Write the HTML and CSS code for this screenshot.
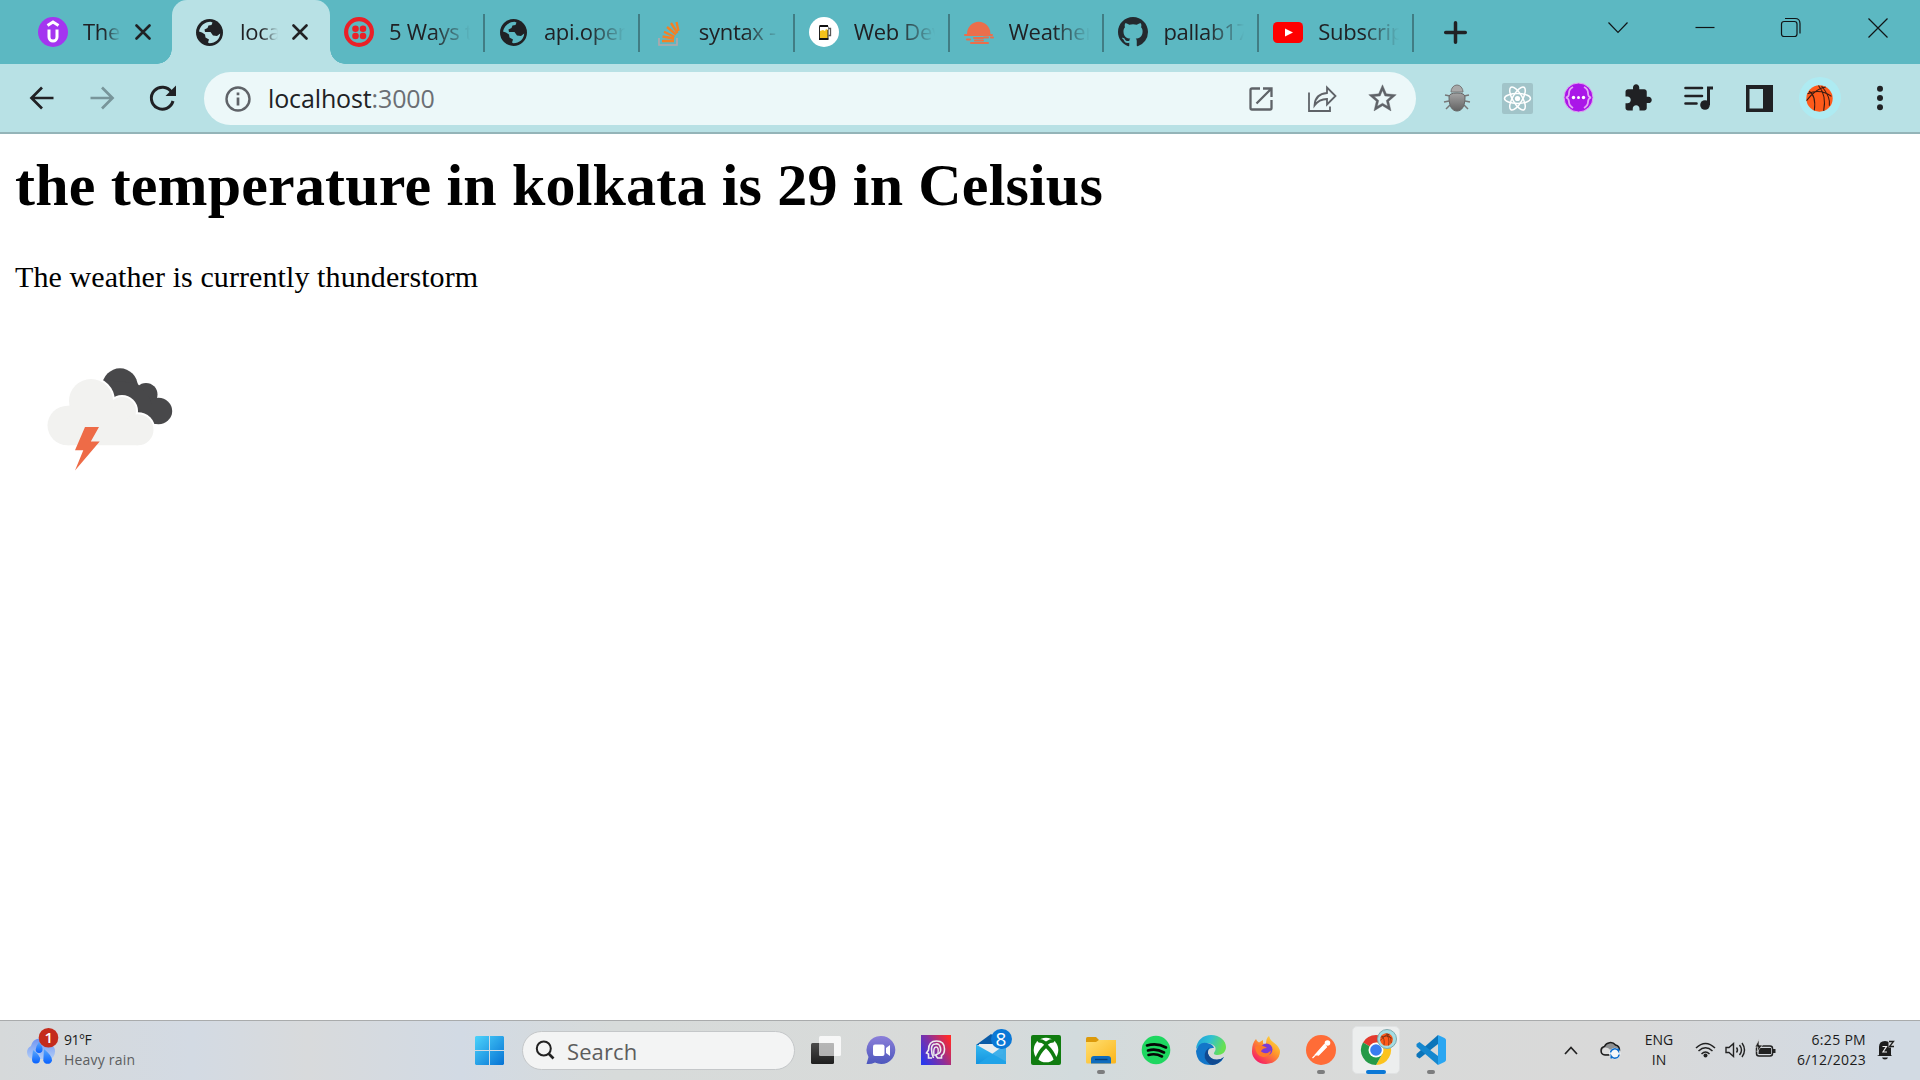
FILE: index.html
```html
<!DOCTYPE html>
<html lang="en">
<head>
<meta charset="utf-8">
<title>localhost:3000</title>
<link rel="stylesheet" href="styles.css">
</head>
<body>
<svg class="defs" width="0" height="0">
  <defs>
    <symbol id="globe" viewBox="0 0 27 27"><circle cx="13.500" cy="13.500" r="13.500" fill="#202124"/><path fill="currentColor" d="M3 12.500C4 7 8.500 3 14.500 2.800L16.500 3.500 15.500 6 12.500 6.500 11.500 9 8.500 10.500 9 13H14.500L17 16.500 21 17 24.200 14.500C24 20 19.500 24.200 13.500 24.300L12 23.500 13 20.500 9.500 18.500 9 15.500 6 13.500z"/></symbol>
    <symbol id="x" viewBox="0 0 16 16"><path d="M1.500 1.500l13 13M14.500 1.500l-13 13" stroke="#202124" stroke-width="2.600" stroke-linecap="round"/></symbol>
    <symbol id="ball" viewBox="0 0 26 26"><circle cx="13" cy="13" r="12.700" fill="#ff5a1a"/><path d="M1.500 8.500Q14 3 24.500 11M3 6Q10 10 8 24.500M12 .500Q20 10 17 25M.500 15Q10 3 19 2M15 1Q24 12 22.500 20" fill="none" stroke="#3a1a10" stroke-width="1"/></symbol>
    <linearGradient id="gWin" x1="0" y1="0" x2="1" y2="1"><stop offset="0" stop-color="#4cd3fb"/><stop offset="1" stop-color="#0672d4"/></linearGradient>
    <linearGradient id="gCloud" x1="0" y1="0" x2="0" y2="1"><stop offset="0" stop-color="#6f94f2"/><stop offset="1" stop-color="#b2cdf6"/></linearGradient>
    <linearGradient id="gDrop" x1="0" y1="0" x2="0" y2="1"><stop offset="0" stop-color="#5aa8fb"/><stop offset="1" stop-color="#0862ff"/></linearGradient>
    <linearGradient id="gChat" x1="0" y1="0" x2="0" y2="1"><stop offset="0" stop-color="#8b7fd9"/><stop offset="1" stop-color="#4d57bd"/></linearGradient>
    <linearGradient id="gHead" x1="0" y1=".8" x2="1" y2=".2"><stop offset="0" stop-color="#2b39ec"/><stop offset=".5" stop-color="#8a2f9c"/><stop offset="1" stop-color="#ff2a2a"/></linearGradient>
    <linearGradient id="gMail" x1="0" y1="0" x2="0" y2="1"><stop offset="0" stop-color="#35b9f1"/><stop offset="1" stop-color="#1494df"/></linearGradient>
    <linearGradient id="gFold" x1="0" y1="0" x2="1" y2="1"><stop offset="0" stop-color="#ffdf72"/><stop offset="1" stop-color="#fbb51a"/></linearGradient>
    <linearGradient id="gEdge" x1="0" y1="0" x2="1" y2=".3"><stop offset="0" stop-color="#1b9ddd"/><stop offset=".5" stop-color="#30c0d2"/><stop offset="1" stop-color="#67e052"/></linearGradient>
    <linearGradient id="gFox" x1="1" y1="0" x2=".2" y2="1"><stop offset="0" stop-color="#fff04a"/><stop offset=".45" stop-color="#ff9a2a"/><stop offset="1" stop-color="#f5126a"/></linearGradient>
    <linearGradient id="gBug" x1="0" y1="0" x2="0" y2="1"><stop offset="0" stop-color="#a4a4a4"/><stop offset="1" stop-color="#626262"/></linearGradient>
    <linearGradient id="gDark" x1="0" y1="0" x2="0" y2="1"><stop offset="0" stop-color="#4b4b4b"/><stop offset="1" stop-color="#1e1e1e"/></linearGradient>
  </defs>
</svg>

<header class="titlebar">
  <div class="tabs">
    <div class="tab tab-first">
      <svg class="fav" viewBox="0 0 30 30"><circle cx="15" cy="15" r="15" fill="#a435f0"/><path d="M9.500 8.500L15 5l5.500 3.500M11 12.500V20a4 4 0 0 0 8 0V12.500" fill="none" stroke="#fff" stroke-width="3"/></svg>
      <span class="title short">The</span>
      <svg class="close"><use href="#x"/></svg>
    </div>
    <div class="tab tab-active">
      <svg class="fav globe"><use href="#globe"/></svg>
      <span class="title short">local</span>
      <svg class="close"><use href="#x"/></svg>
    </div>
    <div class="tab tab-next">
      <svg class="fav" viewBox="0 0 30 30"><circle cx="15" cy="15" r="12.900" fill="none" stroke="#ea2027" stroke-width="4.200"/><g fill="#ea2027"><circle cx="11.500" cy="11.700" r="3.300"/><circle cx="19" cy="11.700" r="3.300"/><circle cx="11.500" cy="19" r="3.300"/><circle cx="19" cy="19" r="3.300"/></g></svg>
      <span class="title">5 Ways to</span>
    </div>
    <div class="tab">
      <svg class="fav globe"><use href="#globe"/></svg>
      <span class="title">api.open</span>
    </div>
    <div class="tab">
      <svg class="fav" viewBox="0 0 30 30"><path d="M5 21v7h18v-7" fill="none" stroke="#b8a6a8" stroke-width="1.600"/><path d="M8 24h12M8.500 19.500l11.500 2M10 14.800l10.500 5M13 10l9 7.500M17 6l6.500 10M22.500 5l2 9" stroke="#f48024" stroke-width="2.300"/></svg>
      <span class="title">syntax -</span>
    </div>
    <div class="tab">
      <svg class="fav" viewBox="0 0 30 30"><circle cx="15" cy="15" r="15" fill="#fff"/><rect x="10.500" y="9" width="8.500" height="13" rx="1" fill="#f3c11b" stroke="#222"/><path d="M11 9h8v4l-2-1-1 2-2-1-3 1z" fill="#fff"/><path d="M10.500 9h8.500M10 22h9.500" stroke="#111" stroke-width="2"/><path d="M19.500 11.500h2v7h-2" fill="none" stroke="#555" stroke-width="1.300"/></svg>
      <span class="title">Web Dev</span>
    </div>
    <div class="tab">
      <svg class="fav" viewBox="0 0 30 30"><path d="M3 17a11.500 12 0 1 1 23.500 0v2H3z" fill="#eb6e4b"/><path d="M1 18h27M10 21h9M20 20.500h4M27 20.500h2M3 22.500h3M11 23.500h8M7 26h17" stroke="#eb6e4b" stroke-width="2" stroke-linecap="round"/></svg>
      <span class="title">Weather</span>
    </div>
    <div class="tab">
      <svg class="fav" viewBox="0 0 16 16"><path fill="#24292f" d="M8 0C3.580 0 0 3.580 0 8c0 3.540 2.290 6.530 5.470 7.590.4.070.55-.17.55-.38 0-.19-.01-.82-.01-1.490-2.010.37-2.530-.49-2.690-.94-.09-.23-.48-.94-.82-1.130-.28-.15-.68-.52-.01-.53.63-.01 1.080.58 1.230.82.72 1.210 1.870.87 2.330.66.070-.52.28-.87.51-1.070-1.780-.2-3.640-.89-3.640-3.950 0-.87.31-1.590.82-2.150-.08-.2-.36-1.020.08-2.120 0 0 .67-.21 2.200.82.64-.18 1.320-.27 2-.27s1.360.09 2 .27c1.530-1.040 2.200-.82 2.200-.82.44 1.100.16 1.920.08 2.120.51.56.82 1.270.82 2.150 0 3.070-1.870 3.750-3.650 3.950.29.25.54.73.54 1.480 0 1.070-.01 1.930-.01 2.200 0 .21.15.46.55.38A8.010 8.010 0 0 0 16 8c0-4.420-3.580-8-8-8z"/></svg>
      <span class="title">pallab17</span>
    </div>
    <div class="tab">
      <svg class="fav" viewBox="0 0 30 30"><rect y="5" width="30" height="21" rx="4.500" fill="#f00"/><path d="M12 11.500l8 4-8 4z" fill="#fff"/></svg>
      <span class="title">Subscrip</span>
    </div>
  </div>
  <svg class="new-tab" viewBox="0 0 23 23"><path d="M11.500 1.700v19.600M1.700 11.500h19.600" stroke="#202124" stroke-width="3.500" stroke-linecap="round"/></svg>
  <div class="win-controls">
    <svg width="22" height="22" viewBox="0 0 22 22"><path d="M1.500 5.500l9.500 10 9.500-10"/></svg>
    <svg width="22" height="22" viewBox="0 0 22 22"><path d="M1.500 10.500h19"/></svg>
    <svg width="22" height="22" viewBox="0 0 22 22"><rect x="1.500" y="4.500" width="15.500" height="15" rx="2.500"/><path d="M5 1.500h10q5 0 5 5v10"/></svg>
    <svg width="22" height="22" viewBox="0 0 22 22"><path d="M1.500 1.500l19 19M20.500 1.500l-19 19"/></svg>
  </div>
</header>

<nav class="toolbar">
  <div class="nav-buttons">
    <svg width="26" height="26" viewBox="0 0 26 26"><path d="M24.500 13H3M13 2.500L2.500 13 13 23.500" fill="none" stroke="#202124" stroke-width="2.700"/></svg>
    <svg width="26" height="26" viewBox="0 0 26 26"><path d="M1.500 13H23M13 2.500L23.500 13 13 23.500" fill="none" stroke="#78959a" stroke-width="2.700"/></svg>
    <svg width="28" height="28" viewBox="0 0 28 28"><path d="M22.500 8A11 11 0 1 0 24 17" fill="none" stroke="#202124" stroke-width="3"/><path d="M27 1.500V12H16.500z" fill="#202124"/></svg>
  </div>
  <div class="omnibox">
    <svg class="info" width="26" height="26" viewBox="0 0 26 26"><circle cx="13" cy="13" r="11.500" fill="none" stroke="#5f6368" stroke-width="2.400"/><path d="M13 6.500v2.800M13 11.500v8" stroke="#5f6368" stroke-width="2.700"/></svg>
    <span class="url">localhost<span class="port">:3000</span></span>
    <div class="omni-actions">
      <svg width="26" height="26" viewBox="0 0 26 26"><path d="M12 2.500H4q-1.500 0-1.500 1.500v18q0 1.500 1.500 1.500h18q1.500 0 1.500-1.500v-8M15 2.500h8.500V11M23 3L8.500 17.500" fill="none" stroke="#5f6368" stroke-width="2.300"/></svg>
      <svg width="30" height="28" viewBox="0 0 30 28"><path d="M2 7.500V26h21v-4.500M7.500 20.500Q8 9 20 8V2.500l8.500 8.500-8.500 8.500V14Q12 14 7.500 20.500z" fill="none" stroke="#5f6368" stroke-width="1.800"/></svg>
      <svg width="33" height="33" viewBox="0 0 24 24"><path fill="#5f6368" stroke="#5f6368" stroke-width=".3" d="M22 9.240l-7.190-.62L12 2 9.190 8.630 2 9.240l5.460 4.730L5.820 21 12 17.270 18.180 21l-1.630-7.030L22 9.240zM12 15.400l-3.760 2.270 1-4.280-3.320-2.880 4.380-.38L12 6.100l1.710 4.040 4.380.38-3.320 2.880 1 4.280L12 15.400z"/></svg>
    </div>
  </div>
  <div class="extensions">
    <svg width="30" height="30" viewBox="0 0 30 30"><path d="M8 13L3 12M7 18l-5 1M8 22l-4 4M22 13l5-1M23 18l5 1M22 22l4 4" stroke="#777" stroke-width="1.500"/><path d="M9 9a6 7 0 0 1 12 0z" fill="#a9a9a9" stroke="#777"/><path d="M7 14q0-4 8-4t8 4c0 9-3 14-8 14S7 23 7 14z" fill="url(#gBug)" stroke="#666"/></svg>
    <svg width="31" height="31" viewBox="0 0 31 31"><rect width="31" height="31" rx="2" fill="#a1c4c9"/><g fill="none" stroke="#fff" stroke-width="1.500"><ellipse cx="15.500" cy="15.500" rx="13" ry="4.900"/><ellipse cx="15.500" cy="15.500" rx="13" ry="4.900" transform="rotate(60 15.500 15.500)"/><ellipse cx="15.500" cy="15.500" rx="13" ry="4.900" transform="rotate(120 15.500 15.500)"/></g><circle cx="15.500" cy="15.500" r="2.600" fill="#fff"/></svg>
    <svg class="raise" width="31" height="31" viewBox="0 0 31 31"><circle cx="15.500" cy="15.500" r="14.500" fill="#aa16e8" stroke="#dfa6f2"/><path d="M10 5Q6 7 6 11t-3 4.500q3 1 3 4.500t4 6M21 5q4 2 4 6t3 4.500q-3 1-3 4.500t-4 6" fill="none" stroke="#e2a6f5" stroke-width="1.800"/><g fill="#fff"><circle cx="10.500" cy="15.500" r="1.700"/><circle cx="15.500" cy="15.500" r="1.500"/><circle cx="20.500" cy="15.500" r="1.700"/></g></svg>
    <svg width="30" height="30" viewBox="0 0 24 24"><path fill="#202124" d="M20.500 11H19V7c0-1.100-.9-2-2-2h-4V3.500C13 2.120 11.880 1 10.500 1S8 2.120 8 3.500V5H4c-1.100 0-1.990.9-1.990 2v3.800H3.500c1.490 0 2.700 1.210 2.700 2.700s-1.210 2.700-2.700 2.700H2V20c0 1.100.9 2 2 2h3.800v-1.500c0-1.490 1.210-2.700 2.700-2.700s2.700 1.210 2.700 2.700V22H17c1.100 0 2-.9 2-2v-4h1.500c1.380 0 2.500-1.120 2.500-2.500S21.880 11 20.500 11z"/></svg>
    <svg width="30" height="28" viewBox="0 0 30 28"><path d="M1.500 4h16.500M1.500 12h16.500M1.500 19.500h11" stroke="#202124" stroke-width="2.600" stroke-linecap="round"/><path d="M24.500 21V4H29" fill="none" stroke="#202124" stroke-width="3"/><circle cx="21" cy="21" r="4.800" fill="#202124"/></svg>
    <svg width="27" height="27" viewBox="0 0 27 27"><path fill="#202124" fill-rule="evenodd" d="M0 0h27v27H0zM3.500 4v19.500h13.500V4z"/></svg>
    <div class="avatar"><svg width="27" height="27"><use href="#ball"/></svg></div>
    <svg width="8" height="26" viewBox="0 0 8 26"><g fill="#202124"><circle cx="4" cy="3.700" r="3"/><circle cx="4" cy="13" r="3"/><circle cx="4" cy="22.300" r="3"/></g></svg>
  </div>
</nav>

<main class="page">
  <h1 class="heading">the temperature in kolkata is 29 in Celsius</h1>
  <p class="summary">The weather is currently thunderstorm</p>
  <svg class="weather" viewBox="0 0 188 188">
    <g fill="#48484a"><circle cx="105" cy="63" r="17.700"/><circle cx="131" cy="71.500" r="11.500"/><ellipse cx="143.500" cy="88" rx="13.700" ry="13.200"/><path d="M87.500 57L122 60l12 14 10 27h-6L98 78z"/></g>
    <g fill="#fff"><circle cx="76" cy="78" r="24"/><circle cx="107" cy="88" r="16"/><circle cx="123" cy="106.500" r="17.300"/></g>
    <g fill="#f2f2f0"><ellipse cx="52.500" cy="102.500" rx="20" ry="19.700"/><circle cx="76" cy="78" r="22"/><circle cx="107" cy="88" r="14"/><circle cx="123" cy="106.700" r="15.500"/><path d="M52.500 83L76 78l31 10 16 19v15.200H52.500z"/></g>
    <path d="M70 104H84L75.800 118.500H84.700L60 147.500 68.300 127.300H60z" fill="#ee6b47"/>
  </svg>
</main>

<footer class="taskbar">
  <div class="widget">
    <svg width="36" height="42" viewBox="0 0 36 42"><path d="M8 31a7 7 0 0 1-1-13A9.500 9.500 0 0 1 25 16q6 1 6 7.500T25 31z" fill="url(#gCloud)"/><g fill="url(#gDrop)"><path d="M15 14q4 5 3.500 7.500a3.300 3.300 0 0 1-6.800 0Q12 18 15 14z"/><path d="M9 22q8 6 7 9.500a4 4 0 0 1-8 0z"/><path d="M20 21q8.500 7 8 11.500a4.500 4.500 0 0 1-8.700 0z"/></g><circle cx="24.500" cy="9.800" r="9.800" fill="#c42b1c"/><text x="24.800" y="15" class="badge-text">1</text></svg>
    <div class="widget-text"><span class="temp">91°F</span><span class="cond">Heavy rain</span></div>
  </div>
  <svg class="start" width="29" height="29" viewBox="0 0 29 29"><path fill="url(#gWin)" d="M1 0h13v14H0V1zM15 0h13l1 1v13H15zM0 15h14v14H1l-1-1zM15 15h14v13l-1 1H15z"/></svg>
  <div class="search">
    <svg width="20" height="20" viewBox="0 0 20 20"><circle cx="8.800" cy="8.500" r="7" fill="none" stroke="#222" stroke-width="2"/><path d="M13.500 13.500l5 5" stroke="#222" stroke-width="2.600"/></svg>
    <span class="search-text">Search</span>
  </div>
  <div class="apps">
    <div class="app"><svg viewBox="0 0 30 30"><rect y="8" width="23" height="21" rx="1.500" fill="url(#gDark)"/><rect x="8" y="1" width="22" height="20" rx="1.500" fill="#fff" opacity=".78"/><path d="M8 8h15v13H8z" fill="#777" opacity=".35"/></svg></div>
    <div class="app"><svg viewBox="0 0 30 30"><path d="M15 1a14 14 0 1 1-6 26.500Q5 29.500.500 29L2.500 22A14 14 0 0 1 15 1z" fill="url(#gChat)"/><rect x="7" y="9.500" width="11.500" height="11.500" rx="2" fill="#fff"/><path d="M20 13l4-3v11l-4-3z" fill="#fff"/></svg></div>
    <div class="app"><svg viewBox="0 0 30 30"><path d="M0 0h30v30H0z" fill="url(#gHead)"/><path d="M11 23H7.500v-4l-2-1 2-3q0-9 8-9t8 8q0 5-3 6.500V23h-4l-2-3 2-1q4-1 3-6t-5-4q-4 0-4 5t2 9" fill="none" stroke="#eee" stroke-width="1.600"/><path d="M13 21q-1-9 2-9t2 6" fill="none" stroke="#eee" stroke-width="1.400"/></svg></div>
    <div class="app mail"><svg viewBox="0 0 30 30"><path d="M0 10L15-1l15 11z" fill="#0a5ca8"/><path d="M3 9h24v10l-12 3L3 12z" fill="#e9edf0"/><path d="M0 9.500l30 17V29H0z" fill="url(#gMail)"/><path d="M30 9v20H2z" fill="#22a5e9" opacity=".85"/></svg><span class="mail-badge">8</span></div>
    <div class="app"><svg viewBox="0 0 30 30"><rect width="30" height="30" rx="2" fill="#107c10"/><circle cx="15" cy="15" r="12.300" fill="#fff"/><path d="M5.500 4.500Q10 3 15 6.500 20 3 24.500 4.500L22.500 7.500Q19 7.500 16.800 9.800 23.500 16 25.500 23L23 25.500Q20.500 18.500 15 13.300 9.500 18.500 7 25.500L4.500 23Q6.500 16 13.200 9.800 11 7.500 7.500 7.500z" fill="#107c10"/></svg></div>
    <div class="app running"><svg viewBox="0 0 30 30"><path d="M0 3.500Q0 2 1.500 2H10l3 3-2 5H0z" fill="#dc9a0b"/><path d="M0 7h10l3-2h17v22q0 1.500-1.500 1.500h-27Q0 28.500 0 27z" fill="url(#gFold)"/><path d="M5 28.500V24q0-3 3-3h14q3 0 3 3v4.500z" fill="#0f6cbd"/><path d="M9 24.500h12.500" stroke="#063f78" stroke-width="1.300"/></svg></div>
    <div class="app"><svg viewBox="0 0 30 30"><circle cx="15" cy="15" r="14.300" fill="#1ed760"/><path d="M6 10.500q10-3 19 2M7 15.500q8-2.500 16 2M7.500 20q7-2 13.500 1.500" fill="none" stroke="#050505" stroke-width="2.600" stroke-linecap="round"/></svg></div>
    <div class="app"><svg viewBox="0 0 30 30"><path d="M0 14C1 5 7 0 15 0c9 0 15 6 15 12 0 5-4 8-8.500 8-3 0-4.500-1-3-3q3-5-2-7.500Q8 5 0 14z" fill="url(#gEdge)"/><path d="M0 16Q3 6 11 8q6 1 7 5-7-1-6 6 2 6 9 6 4 0 7-3-4 8-13 8Q1 30 0 16z" fill="#1276c9"/><path d="M13.500 12q-8 7-3 14 2 3 6 4 7-1 11.500-8-3 2.500-7 2.500-7 0-9-6-.5-4 1.500-6.500z" fill="#104a91"/></svg></div>
    <div class="app"><svg viewBox="0 0 30 30"><path d="M1 16q0-8 4-12 1 3 3 3.500L12 5v3.500l3 .5Q15 3 18 1q1 4 4 6 7 5 7 10A14 12.500 0 0 1 1 16z" fill="url(#gFox)"/><circle cx="15.500" cy="14.500" r="6" fill="#7b3bd6"/><path d="M4 12q4-3 8-1 3 1 4 2-5 0-6 3.500 5 4 10-1-1 7-8 6.500Q5 21 4 12z" fill="#ff7a2a"/></svg></div>
    <div class="app running"><svg viewBox="0 0 30 30"><circle cx="15" cy="15" r="15" fill="#ff6c37"/><circle cx="21.500" cy="8" r="2.800" fill="#fff"/><path d="M18.500 9.500l2 2.500-8 8-3-.5zM10 19.500L6.500 23" fill="#fff" stroke="#fff" stroke-width="1.200"/></svg></div>
    <div class="app active"><svg viewBox="0 0 30 30"><path d="M15 15L2 7.500A15 15 0 0 1 28 7.500z" fill="#e33b2e"/><path d="M15 15V7.500h13A15 15 0 0 1 15 30L21.500 18.500z" fill="#fcc31e"/><path d="M2 7.500A15 15 0 0 0 15 30l6.500-11.500L15 15z" fill="#249a48"/><circle cx="15" cy="15" r="7.500" fill="#fff"/><circle cx="15" cy="15" r="5.800" fill="#3a7df0"/></svg><span class="profile"><svg width="12" height="12"><use href="#ball"/></svg></span></div>
    <div class="app running"><svg viewBox="0 0 30 30"><path d="M22 0v9L3.500 23.500.500 21.500V19z" fill="#0b74b9"/><path d="M22 30v-9L3.500 7 .500 9v2.500z" fill="#1487cf"/><path d="M22 0l6.500 3Q30 4 30 5v20q0 1-1.500 2L22 30z" fill="#2aa6f2"/></svg></div>
  </div>
  <div class="tray">
    <svg class="chev" width="14" height="9" viewBox="0 0 14 9"><path d="M1 8l6-6.500L13 8" fill="none" stroke="#222" stroke-width="1.700"/></svg>
    <svg class="cloud" width="22" height="20" viewBox="0 0 22 20"><path d="M5 15A4.300 4.300 0 0 1 4.500 6.500 6.500 6.500 0 0 1 15.500 5q4 1 4 5T16 15z" fill="#8e9092" stroke="#1b1b1b" stroke-width="1.500"/><path d="M2 11q1-5 6-3l7 6H5q-3 0-3-3z" fill="#ddd"/><circle cx="14.800" cy="13.500" r="5.700" fill="#f3f6f9"/><path d="M10.500 12.500a4.300 4.300 0 0 1 8-1.500V8.500M19.200 14.500a4.300 4.300 0 0 1-8 1.500v2.500" fill="none" stroke="#0b6ccd" stroke-width="1.500"/></svg>
    <div class="lang"><span>ENG</span><span>IN</span></div>
    <svg class="wifi" width="21" height="16" viewBox="0 0 21 16"><path d="M1 6q9.500-9 19 0M3.500 9q7-6.500 14 0M6.500 12q4-4 8 0" fill="none" stroke="#222" stroke-width="1.500"/><circle cx="10.500" cy="13.500" r="2" fill="#222"/></svg>
    <svg class="vol" width="21" height="16" viewBox="0 0 21 16"><path d="M1 5.500h3L8.500 1.500v13L4 10.500H1zM11.500 5.500q2 2.500 0 5M14.500 3q4 5 0 10M17 1q5 7 0 14" fill="none" stroke="#222" stroke-width="1.400"/></svg>
    <svg class="batt" width="21" height="18" viewBox="0 0 21 18"><rect x="1.500" y="5" width="16" height="10" rx="2.500" fill="none" stroke="#222" stroke-width="1.500"/><path d="M4 7h12v6H3.500zM18 8h2.500v4H18z" fill="#222"/><path d="M4-1.500L0 6h3l-1 5 5.500-7H4z" fill="#222" stroke="#dadada" stroke-width=".7"/></svg>
    <div class="clock"><span>6:25 PM</span><span>6/12/2023</span></div>
    <svg class="bell" width="18" height="20" viewBox="0 0 18 20"><path d="M2 15V7q0-6 6-6 6 0 6 6v8l1 1H0zM5 17.500h6q-.5 2-3 2t-3-2z" fill="#1d1d1d"/><path d="M5.500 6.500h4L6 12h4" fill="none" stroke="#eee" stroke-width="1.200"/><path d="M11.500.500h6v7h-6z" fill="#d8dbde"/><path d="M12 1.500h4.500L12.500 6.500h4.500" fill="none" stroke="#1d1d1d" stroke-width="1.300"/></svg>
  </div>
</footer>
</body>
</html>
```
FILE: styles.css
```css
* { box-sizing: border-box; }
body {
  margin: 0;
  width: 1920px;
  height: 1080px;
  overflow: hidden;
  display: flex;
  flex-direction: column;
  background: #fff;
  color: #202124;
  font-family: "Open Sans", "Noto Sans", sans-serif;
}
svg { display: block; flex: none; overflow: visible; }
.defs { width: 0; height: 0; position: absolute; }

/* Tab strip */
.titlebar { height: 64px; flex: none; display: flex; align-items: flex-start; background: #5cb8c2; }
.tabs { display: flex; padding-left: 23px; height: 64px; }
.tab { width: 154.900px; height: 64px; padding-left: 14px; display: flex; align-items: center; position: relative; }
.tab::after { content: ""; position: absolute; right: 0; top: 14px; width: 2px; height: 38px; background: #417d84; }
.tab-first { width: 149px; padding-left: 15px; }
.tab-active { width: 158px; padding-left: 23px; background: #b8e1e5; border-radius: 15px 15px 0 0; }
.tab-first::after { display: none; }
.tab-active::before,
.tab-active::after { content: ""; position: absolute; width: 15px; height: 15px; top: 49px; bottom: 0; }
.tab-active::before { left: -15px; background: radial-gradient(circle at 0 0, transparent 14.500px, #b8e1e5 15px); }
.tab-active::after { right: -15px; background: radial-gradient(circle at 100% 0, transparent 14.500px, #b8e1e5 15px); }
.fav { width: 30px; height: 30px; }
.fav.globe { width: 27px; height: 27px; margin: 1px 2px 0 1px; color: #5cb8c2; }
.tab-active .fav.globe { color: #b8e1e5; }
.title {
  margin-left: 15px;
  width: 81px;
  overflow: hidden;
  white-space: nowrap;
  font-size: 22px;
  line-height: 34px;
  margin-top: -2px;
  letter-spacing: -0.300px;
  -webkit-mask-image: linear-gradient(90deg, #000 55%, transparent 100%);
  mask-image: linear-gradient(90deg, #000 55%, transparent 100%);
}
.title.short { width: 38px; }
.close { width: 16px; height: 16px; margin-left: 14px; }
.new-tab { width: 23px; height: 23px; margin: 21px 0 0 30px; }
.win-controls { margin-left: auto; width: 345px; display: grid; grid-template-columns: repeat(4, 86.600px); justify-items: center; padding-top: 17px; }
.win-controls svg { fill: none; stroke: #101517; stroke-width: 1.200; }

/* Toolbar */
.toolbar { height: 70px; flex: none; display: flex; align-items: flex-start; background: #b8e1e5; border-bottom: 2px solid #94b4b8; padding-top: 8px; }
.nav-buttons { width: 204px; height: 52px; padding-left: 29px; display: flex; align-items: center; gap: 34px; }
.omnibox { width: 1212px; height: 53px; border-radius: 27px; background: #ecf8f9; display: flex; align-items: center; padding-left: 21px; }
.url { margin: -2px 0 0 17px; font-size: 25px; line-height: 36px; letter-spacing: -0.130px; color: #202124; }
.port { color: #6b6f74; }
.omni-actions { margin: 0 1px 0 auto; width: 184px; display: grid; grid-template-columns: repeat(3, 60.500px); justify-items: center; align-items: center; }
.extensions { margin-left: 11px; height: 52px; display: grid; grid-template-columns: repeat(8, 60.400px); justify-items: center; align-items: center; }
.raise { margin: -2px 0 0 2px; }
.avatar { width: 42px; height: 42px; border-radius: 50%; background: #aeebf2; display: flex; align-items: center; justify-content: center; }

/* Document */
.page { flex: 1; padding: 16px 15px 0; font-family: "Liberation Serif", serif; color: #000; }
.heading { margin: 0; font-size: 60px; line-height: 70px; font-weight: bold; letter-spacing: 0.170px; }
.summary { margin: 39px 0 0; font-size: 30px; line-height: 35px; letter-spacing: 0.090px; }
.weather { width: 188px; height: 188px; margin-top: 29px; }

/* Taskbar */
.taskbar { height: 60px; flex: none; display: flex; align-items: center; padding-bottom: 1px; border-top: 1px solid #a9abac; background: linear-gradient(90deg, #d6d9da 0, #d3dae3 10%, #d8dadc 16%, #d2dae4 24%, #d7dbda 32%, #d8dad9 50%, #d2dbdd 56%, #d8dad9 64%, #d9d9d9 85%, #d2dae3 98%); color: #1b1b1b; }
.widget { width: 475px; padding-left: 24px; display: flex; align-items: center; gap: 4px; }
.widget svg { margin: -3px 0 0 0; }
.badge-text { fill: #fff; font-size: 15px; font-weight: 600; text-anchor: middle; }
.widget-text { display: flex; flex-direction: column; font-size: 14px; line-height: 20px; margin-top: -1px; }
.temp { letter-spacing: -0.500px; }
.cond { color: #5c5e60; letter-spacing: 0.200px; }
.search { margin-left: 18px; width: 273px; height: 39px; border-radius: 20px; background: #f3f4f4; border: 1px solid #c4c7c9; display: flex; align-items: center; padding-left: 12px; gap: 12px; }
.search-text { font-size: 22px; color: #5d5d5d; line-height: 30px; letter-spacing: 0.100px; padding-top: 1px; }
.apps { margin-left: 3px; display: grid; grid-template-columns: repeat(12, 55px); justify-items: center; }
.app { position: relative; width: 48px; height: 48px; border-radius: 5px; display: flex; align-items: center; justify-content: center; }
.app svg { width: 30px; height: 30px; }
.app.running::after, .app.active::after { content: ""; position: absolute; left: 20px; bottom: 0; width: 8px; height: 4px; border-radius: 2px; background: #7c7d7e; }
.app.active { background: #eceeee; border: 1px solid #e0e2e3; }
.app.active::after { left: 13px; bottom: -1px; width: 20px; background: #0b78d6; }
.mail-badge { position: absolute; left: 24px; top: 3px; width: 21px; height: 20px; border-radius: 10px; background: #0b78d6; color: #fff; font-size: 19px; line-height: 20px; text-align: center; }
.app .profile { position: absolute; left: 24px; top: 2px; width: 20px; height: 20px; border-radius: 50%; background: #a3dde3; border: 1px solid #7fa9ae; display: flex; align-items: center; justify-content: center; }
.app .profile svg { width: 13px; height: 13px; }
.tray { margin-left: auto; width: 356px; display: flex; align-items: center; font-size: 14px; line-height: 20px; }
.cloud { margin-left: 22px; }
.lang { width: 44px; margin: -1px 0 0 15px; display: flex; flex-direction: column; align-items: center; }
.wifi { margin-left: 14px; }
.vol { margin-left: 9px; }
.batt { margin-left: 9px; }
.clock { width: 90px; margin-top: -1px; letter-spacing: 0.300px; display: flex; flex-direction: column; align-items: flex-end; }
.bell { margin-left: 11px; }
```
